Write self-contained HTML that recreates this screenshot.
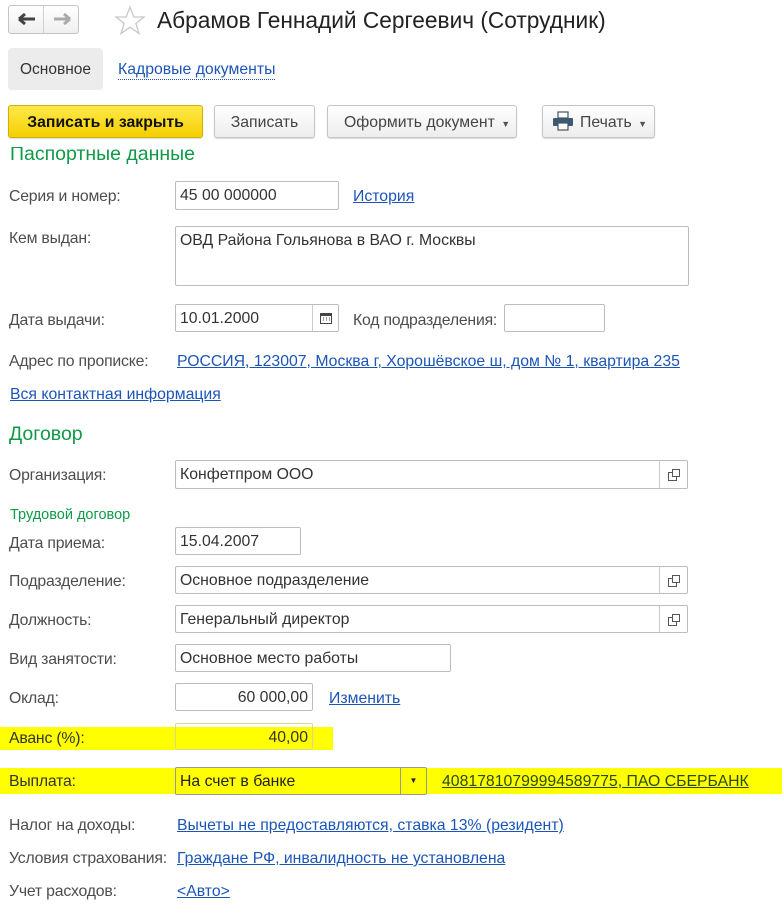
<!DOCTYPE html>
<html><head><meta charset="utf-8">
<style>
body{margin:0;width:782px;height:911px;background:#fff;position:relative;overflow:hidden;font-family:"Liberation Sans",Arial,sans-serif;font-size:15.8px;color:#333}
.a{position:absolute;white-space:nowrap}
.lbl{position:absolute;left:9px;color:#4d4d4d;letter-spacing:-0.2px}
.in{position:absolute;border:1px solid #bdbdbd;border-radius:2px;background:#fff;box-sizing:border-box;padding:0 4px;line-height:28px;color:#333;white-space:nowrap}
.lnk{position:absolute;color:#1b55b8;text-decoration:underline;white-space:nowrap}
.grn{position:absolute;color:#109a48;white-space:nowrap}
.btn{position:absolute;top:105px;height:33px;box-sizing:border-box;border:1px solid #c4c4c4;border-radius:3px;background:linear-gradient(#fff,#ededed);color:#444;line-height:33px;text-align:center;box-shadow:0 1px 1px rgba(0,0,0,.15);white-space:nowrap}
.sb{position:absolute;right:0;top:0;bottom:0;width:27px;border-left:1px solid #ccc;text-align:center}
.hl{position:absolute;background:#ffff00}
</style></head><body>
<div class="a" style="left:8px;top:5px;width:71px;height:29px;border:1px solid #c4c4c4;border-radius:3px;box-sizing:border-box;background:linear-gradient(#fff,#efefef)"></div>
<div class="a" style="left:43px;top:6px;width:1px;height:27px;background:#d0d0d0"></div>
<svg class="a" style="left:17px;top:11px" width="20" height="16"><path d="M2 8H18M2 8L8 3M2 8L8 13" stroke="#444" stroke-width="3" fill="none"/></svg>
<svg class="a" style="left:52px;top:11px" width="20" height="16"><path d="M2 8H18M18 8L12 3M18 8L12 13" stroke="#aaa" stroke-width="3" fill="none"/></svg>
<svg class="a" style="left:114px;top:5px" width="32" height="30"><path d="M16 2L19.8 12H30L21.8 18.5L25 28.5L16 22.3L7 28.5L10.2 18.5L2 12H12.2Z" fill="none" stroke="#c8c8c8" stroke-width="1.3"/></svg>
<div class="a" style="left:157px;top:7px;font-size:22.7px;color:#222">Абрамов Геннадий Сергеевич (Сотрудник)</div>
<div class="a" style="left:8px;top:48px;width:95px;height:42px;background:#ececec;border-radius:4px;line-height:44px;text-align:center;color:#333;font-size:15.5px">Основное</div>
<div class="a" style="left:118px;top:61px;color:#1b55b8;border-bottom:1px dotted #1b55b8;line-height:18px">Кадровые документы</div>
<div class="btn" style="left:8px;width:195px;background:linear-gradient(#ffe94a,#f3cf00);border-color:#d1b000;color:#111;font-weight:bold">Записать и закрыть</div>
<div class="btn" style="left:214px;width:101px">Записать</div>
<div class="btn" style="left:327px;width:190px;text-align:left;padding-left:16px">Оформить документ <span style="font-size:9px;color:#555;margin-left:2px">▼</span></div>
<div class="btn" style="left:542px;width:113px;text-align:left;padding-left:37px">Печать <span style="font-size:9px;color:#555;margin-left:2px">▼</span></div>
<svg class="a" style="left:552px;top:111px" width="22" height="20"><rect x="6" y="1" width="10" height="6" fill="#fff" stroke="#456" stroke-width="1.2"/><rect x="1" y="7" width="20" height="8" rx="1" fill="#3d5a73"/><rect x="6" y="12" width="10" height="7" fill="#fff" stroke="#456" stroke-width="1.2"/></svg>
<div style="position:absolute;left:0;top:147px;width:782px;height:30px;overflow:hidden">
<div class="grn" style="left:10px;top:-4px;font-size:19.5px">Паспортные данные</div>
</div>
<div class="lbl" style="top:188px">Серия и номер:</div>
<div class="in" style="left:175px;top:181px;width:164px;height:29px">45 00 000000</div>
<div class="lnk" style="left:353px;top:188px">История</div>
<div class="lbl" style="top:230px">Кем выдан:</div>
<div class="in" style="left:175px;top:226px;width:514px;height:60px;line-height:28px">ОВД Района Гольянова в ВАО г. Москвы</div>
<div class="lbl" style="top:312px">Дата выдачи:</div>
<div class="in" style="left:175px;top:304px;width:164px;height:28px;line-height:27px">10.01.2000<div class="sb" style="width:25px"><svg width="12" height="12" style="margin-top:7px"><rect x="0.5" y="1.5" width="11" height="10" fill="none" stroke="#444"/><rect x="0.5" y="1.5" width="11" height="2.5" fill="#444"/><path d="M3 6h1M6 6h1M9 6h1M3 8h1M6 8h1M9 8h1" stroke="#444"/></svg></div></div>
<div class="a" style="left:353px;top:312px;color:#4d4d4d;letter-spacing:-0.2px">Код подразделения:</div>
<div class="in" style="left:504px;top:304px;width:101px;height:28px"></div>
<div class="lbl" style="top:353px">Адрес по прописке:</div>
<div class="lnk" style="left:177px;top:353px">РОССИЯ, 123007, Москва г, Хорошёвское ш, дом № 1, квартира 235</div>
<div class="lnk" style="left:10px;top:386px">Вся контактная информация</div>
<div class="grn" style="left:9px;top:423px;font-size:19.5px">Договор</div>
<div class="lbl" style="top:467px">Организация:</div>
<div class="in" style="left:175px;top:460px;width:513px;height:29px">Конфетпром ООО<div class="sb"><svg width="12" height="12" style="margin-top:8px"><rect x="4.5" y="0.5" width="7" height="7" fill="none" stroke="#555"/><path d="M4.5 3.5H0.5V11.5H8.5V7.5" fill="none" stroke="#555"/></svg></div></div>
<div class="grn" style="left:10px;top:507px;font-size:14.5px">Трудовой договор</div>
<div class="lbl" style="top:535px">Дата приема:</div>
<div class="in" style="left:175px;top:527px;width:126px;height:28px;line-height:27px">15.04.2007</div>
<div class="lbl" style="top:573px">Подразделение:</div>
<div class="in" style="left:175px;top:566px;width:513px;height:28px;line-height:27px">Основное подразделение<div class="sb"><svg width="12" height="12" style="margin-top:8px"><rect x="4.5" y="0.5" width="7" height="7" fill="none" stroke="#555"/><path d="M4.5 3.5H0.5V11.5H8.5V7.5" fill="none" stroke="#555"/></svg></div></div>
<div class="lbl" style="top:612px">Должность:</div>
<div class="in" style="left:175px;top:605px;width:513px;height:28px;line-height:27px">Генеральный директор<div class="sb"><svg width="12" height="12" style="margin-top:8px"><rect x="4.5" y="0.5" width="7" height="7" fill="none" stroke="#555"/><path d="M4.5 3.5H0.5V11.5H8.5V7.5" fill="none" stroke="#555"/></svg></div></div>
<div class="lbl" style="top:651px">Вид занятости:</div>
<div class="in" style="left:175px;top:644px;width:276px;height:28px;line-height:27px">Основное место работы</div>
<div class="lbl" style="top:690px">Оклад:</div>
<div class="in" style="left:175px;top:683px;width:138px;height:28px;line-height:27px;text-align:right">60 000,00</div>
<div class="lnk" style="left:329px;top:690px">Изменить</div>
<div class="hl" style="left:0;top:727px;width:333px;height:23px"></div>
<div class="hl" style="left:0;top:768px;width:782px;height:26px"></div>
<div class="lbl" style="top:730px;color:#333">Аванс (%):</div>
<div class="in" style="left:175px;top:723px;width:138px;height:27px;text-align:right;background:transparent;border-color:#d8d890">40,00</div>
<div class="lbl" style="top:773px;color:#333">Выплата:</div>
<div class="in" style="left:175px;top:767px;width:252px;height:28px;line-height:27px;background:transparent;border-color:#999;color:#222">На счет в банке<div class="sb" style="width:25px;border-color:#999;font-size:8px;line-height:26px">▼</div></div>
<div class="lnk" style="left:442px;top:773px;color:#2a4a10">40817810799994589775, ПАО СБЕРБАНК</div>
<div class="lbl" style="top:817px">Налог на доходы:</div>
<div class="lnk" style="left:177px;top:817px">Вычеты не предоставляются, ставка 13% (резидент)</div>
<div class="lbl" style="top:850px">Условия страхования:</div>
<div class="lnk" style="left:177px;top:850px">Граждане РФ, инвалидность не установлена</div>
<div class="lbl" style="top:883px">Учет расходов:</div>
<div class="lnk" style="left:177px;top:883px">&lt;Авто&gt;</div>
</body></html>
